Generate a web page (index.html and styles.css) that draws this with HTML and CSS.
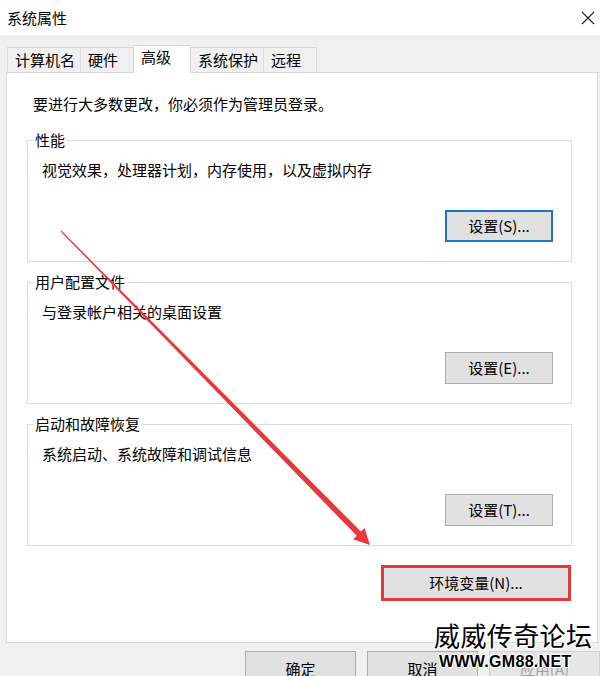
FILE: index.html
```html
<!DOCTYPE html>
<html lang="zh-CN">
<head>
<meta charset="utf-8">
<title>系统属性</title>
<link rel="stylesheet" href="styles.css">
</head>
<body>
<div class="window">
  <div class="titlebar">
    <span class="title">系统属性</span>
    <svg class="close" width="14" height="14" viewBox="0 0 14 14"><path d="M1 1 L13 13 M13 1 L1 13" stroke="#222" stroke-width="1.1" fill="none"/></svg>
  </div>
  <div class="tabs">
    <div class="tab">计算机名</div>
    <div class="tab">硬件</div>
    <div class="tab tab-active">高级</div>
    <div class="tab">系统保护</div>
    <div class="tab">远程</div>
  </div>
  <div class="panel">
    <p class="intro">要进行大多数更改，你必须作为管理员登录。</p>
    <fieldset class="group">
      <legend>性能</legend>
      <p class="desc">视觉效果，处理器计划，内存使用，以及虚拟内存</p>
      <div class="actions"><button class="btn btn-set btn-focus">设置(S)...</button></div>
    </fieldset>
    <fieldset class="group">
      <legend>用户配置文件</legend>
      <p class="desc">与登录帐户相关的桌面设置</p>
      <div class="actions"><button class="btn btn-set">设置(E)...</button></div>
    </fieldset>
    <fieldset class="group">
      <legend>启动和故障恢复</legend>
      <p class="desc">系统启动、系统故障和调试信息</p>
      <div class="actions"><button class="btn btn-set">设置(T)...</button></div>
    </fieldset>
    <div class="env-row"><button class="btn btn-env">环境变量(N)...</button></div>
  </div>
  <div class="footer">
    <button class="btn btn-foot">确定</button>
    <button class="btn btn-foot">取消</button>
    <button class="btn btn-foot btn-disabled">应用(A)</button>
  </div>
  <div class="watermark">
    <div class="wm-cn">威威传奇论坛</div>
    <div class="wm-en">WWW.GM88.NET</div>
  </div>
  <svg class="arrow" width="600" height="676" viewBox="0 0 600 676">
    <polygon points="61.4,230.6 360.9,531.5 364.5,528.0 370,545 353.1,539.2 356.7,535.7 60.6,231.4" fill="#e8383d"/>
  </svg>
</div>
</body>
</html>
```
FILE: styles.css
```css
* { box-sizing: border-box; }
html, body { margin: 0; padding: 0; }
body {
  width: 600px;
  height: 676px;
  overflow: hidden;
  background: #f0f0f0;
  font-family: "Noto Sans CJK SC", "Microsoft YaHei", sans-serif;
  font-size: 15px;
  color: #000;
}
.window {
  position: relative;
  width: 600px;
  height: 676px;
}
.titlebar {
  height: 35px;
  background: #fff;
  display: flex;
  align-items: center;
  justify-content: space-between;
  padding: 0 5px 0 7px;
}
.title { line-height: 20px; }
.close { display: block; }

.tabs {
  display: flex;
  align-items: flex-end;
  height: 37px;
  padding-left: 7px;
}
.tab {
  height: 25px;
  line-height: 23px;
  padding: 0 5px 0 7px;
  min-width: 54px;
  border: 1px solid #d9d9d9;
  border-bottom: none;
  background: #f0f0f0;
  margin-left: -1px;
  white-space: nowrap;
}
.tab:first-child { margin-left: 0; }
.tab-active {
  position: relative;
  z-index: 1;
  height: 28px;
  line-height: 22px;
  min-width: 58px;
  background: #fff;
  margin-bottom: -1px;
}

.panel {
  width: 592px;
  height: 571px;
  margin-left: 6px;
  background: #fff;
  border: 1px solid #d9d9d9;
  padding: 21px 25px 0 20px;
}
.intro {
  margin: 0 0 16px 6px;
  line-height: 20px;
}
.group {
  margin: 0 0 10px 0;
  min-width: 0;
  border: 1px solid #dcdcdc;
  padding: 0 18px 19px 6px;
}
.group legend {
  padding: 0 1px;
  line-height: 20px;
}
.desc {
  margin: 10px 0 0 8px;
  line-height: 20px;
}
.actions {
  display: flex;
  justify-content: flex-end;
  margin-top: 30px;
}
.btn {
  font-family: inherit;
  font-size: 15px;
  color: #000;
  background: #e1e1e1;
  border: 1px solid #adadad;
  padding: 0;
  margin: 0;
  line-height: 20px;
}
.btn-set {
  width: 108px;
  height: 32px;
}
.btn-focus {
  border: 2px solid #1e74c8;
}
.env-row {
  display: flex;
  justify-content: flex-end;
  margin-top: 19px;
  padding-right: 1px;
}
.btn-env {
  width: 190px;
  height: 36px;
  border: 3px solid #e0393e;
}
.footer {
  display: flex;
  justify-content: flex-end;
  gap: 11px;
  margin-top: 8px;
}
.btn-foot {
  width: 111px;
  height: 36px;
}
.btn-disabled {
  color: #a0a0a0;
  border-color: #cfcfcf;
  background: #e6e6e6;
}

.watermark {
  position: absolute;
  left: 434px;
  top: 618px;
  width: 166px;
  text-align: left;
}
.wm-cn {
  font-size: 26px;
  line-height: 34px;
  letter-spacing: 0.4px;
  font-weight: 400;
  color: #000;
  text-shadow: 1px 0 0 #fff, -1px 0 0 #fff, 0 1px 0 #fff, 0 -1px 0 #fff, 1px 1px 0 #fff, -1px -1px 0 #fff, 1px -1px 0 #fff, -1px 1px 0 #fff;
}
.wm-en {
  font-family: "Liberation Sans", Arial, sans-serif;
  font-weight: bold;
  font-size: 16px;
  line-height: 20px;
  letter-spacing: 0.3px;
  padding-left: 5px;
  color: #000;
  text-shadow: 1px 0 0 #fff, -1px 0 0 #fff, 0 1px 0 #fff, 0 -1px 0 #fff, 1px 1px 0 #fff, -1px -1px 0 #fff;
}
.arrow {
  position: absolute;
  left: 0;
  top: 0;
  pointer-events: none;
}
```
